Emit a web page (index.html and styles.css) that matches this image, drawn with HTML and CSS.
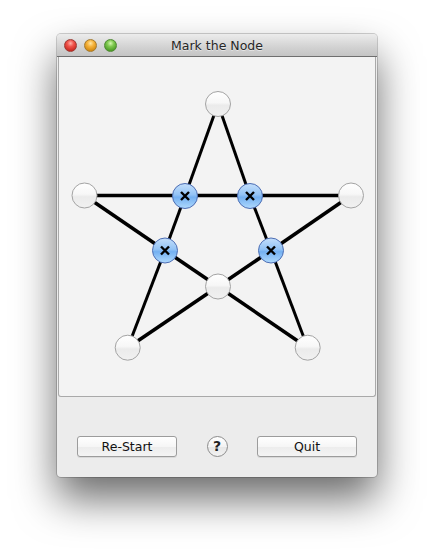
FILE: index.html
```html
<!DOCTYPE html>
<html lang="en">
  <head>
    <meta charset="UTF-8" />
    <title>Mark the Node</title>
    <link rel="stylesheet" href="styles.css">
  </head>
  <body>
    <div class="window">
      <div class="titlebar">
        <div class="lights">
          <span class="light red"></span>
          <span class="light yellow"></span>
          <span class="light green"></span>
        </div>
        <div class="title">Mark the Node</div>
      </div>
      <div class="board">
        <svg class="graph" width="318" height="339" viewBox="0 -1 318 339">
          <defs>
            <linearGradient id="white" x1="0" y1="0" x2="0" y2="1">
              <stop offset="0" stop-color="#ffffff" />
              <stop offset="0.45" stop-color="#f7f7f7" />
              <stop offset="0.55" stop-color="#ebebeb" />
              <stop offset="1" stop-color="#f1f1f1" />
            </linearGradient>
            <linearGradient id="blue" x1="0" y1="0" x2="0" y2="1">
              <stop offset="0" stop-color="#c4dffb" />
              <stop offset="0.45" stop-color="#93c3f5" />
              <stop offset="0.55" stop-color="#74b0f1" />
              <stop offset="1" stop-color="#b0dafd" />
            </linearGradient>
          </defs>
          <g class="edges">
            <line x1="159" y1="46" x2="126" y2="138" />
            <line x1="126" y1="138" x2="106" y2="192.5" />
            <line x1="106" y1="192.5" x2="68.7" y2="289.7" />
            <line x1="159" y1="46" x2="191" y2="138" />
            <line x1="191" y1="138" x2="212" y2="192.5" />
            <line x1="212" y1="192.5" x2="248.7" y2="289.7" />
            <line class="thick" x1="25.5" y1="137.5" x2="292" y2="137.5" />
            <line class="thick" x1="25.5" y1="137.5" x2="106" y2="192.5" />
            <line class="thick" x1="106" y1="192.5" x2="159" y2="228.5" />
            <line class="thick" x1="159" y1="228.5" x2="248.7" y2="289.7" />
            <line class="thick" x1="292" y1="137.5" x2="212" y2="192.5" />
            <line class="thick" x1="212" y1="192.5" x2="159" y2="228.5" />
            <line class="thick" x1="159" y1="228.5" x2="68.7" y2="289.7" />
          </g>
          <g class="node">
            <circle cx="159" cy="46" r="12.5" />
            <circle cx="25.5" cy="137.5" r="12.5" />
            <circle cx="292" cy="137.5" r="12.5" />
            <circle cx="159" cy="228.5" r="12.5" />
            <circle cx="68.7" cy="289.7" r="12.5" />
            <circle cx="248.7" cy="289.7" r="12.5" />
          </g>
          <g class="node marked">
            <circle cx="126" cy="138" r="12.5" />
            <circle cx="191" cy="138" r="12.5" />
            <circle cx="106" cy="192.5" r="12.5" />
            <circle cx="212" cy="192.5" r="12.5" />
          </g>
          <g class="cross">
            <path d="M122 134 l8 8 M130 134 l-8 8" />
            <path d="M187 134 l8 8 M195 134 l-8 8" />
            <path d="M102 188.5 l8 8 M110 188.5 l-8 8" />
            <path d="M208 188.5 l8 8 M216 188.5 l-8 8" />
          </g>
        </svg>
      </div>
      <div class="controls">
        <button class="push">Re-Start</button>
        <button class="help">?</button>
        <button class="push">Quit</button>
      </div>
    </div>
  </body>
</html>
```

FILE: styles.css
```css
html {
  background: #ffffff;
}

body {
  margin: 0;
  padding: 34px 0 0 57px;
  min-height: 556px;
  box-sizing: border-box;
  background: #ffffff;
  font-family: 'DejaVu Sans', 'Liberation Sans', sans-serif;
}

.window {
  width: 320px;
  height: 443px;
  background: #ececec;
  border-radius: 4px;
  box-shadow: 0 22px 42px rgba(0, 0, 0, 0.58), 0 0 0 1px rgba(0, 0, 0, 0.18);
  display: flex;
  flex-direction: column;
}

.titlebar {
  height: 22px;
  border-bottom: 1px solid #6e6e6e;
  border-radius: 4px 4px 0 0;
  background: linear-gradient(#ececec, #d2d2d2 60%, #c4c4c4);
  display: flex;
  align-items: center;
  position: relative;
}

.lights {
  display: flex;
  gap: 7px;
  padding-left: 7px;
  padding-top: 1px;
}

.light {
  width: 13px;
  height: 13px;
  border-radius: 50%;
  box-sizing: border-box;
}

.red {
  background: radial-gradient(circle at 50% 30%, #ffb1a8 0, #f0534a 35%, #c8281f 80%);
  border: 1px solid #9c3a34;
}

.yellow {
  background: radial-gradient(circle at 50% 30%, #ffe6a3 0, #f6b33c 35%, #d1880f 80%);
  border: 1px solid #a47a2e;
}

.green {
  background: radial-gradient(circle at 50% 30%, #d4f7b0 0, #7fc94f 35%, #4b9a25 80%);
  border: 1px solid #4f8a34;
}

.title {
  position: absolute;
  left: 0;
  right: 0;
  top: 4px;
  text-align: center;
  font-size: 12.5px;
  color: #262626;
  text-shadow: 0 1px 0 rgba(255, 255, 255, 0.5);
}

.board {
  height: 339px;
  margin: 0 1px;
  background: #f3f3f3;
  border: 1px solid #a9a9a9;
  border-top: none;
  border-radius: 0 0 3px 3px;
}

.graph {
  display: block;
}

.edges line {
  stroke: #000000;
  stroke-width: 3;
}

.edges line.thick {
  stroke-width: 3.6;
}

.node circle {
  fill: url(#white);
  stroke: #a3a3a3;
  stroke-width: 1;
}

.node.marked circle {
  fill: url(#blue);
  stroke: #4d6db3;
}

.cross path {
  stroke: #000000;
  stroke-width: 2.4;
  fill: none;
}

.controls {
  display: flex;
  justify-content: space-between;
  align-items: center;
  padding: 39px 20px 0;
}

.push {
  width: 100px;
  height: 21px;
  padding: 0;
  border: 1px solid #9c9c9c;
  border-radius: 3px;
  background: linear-gradient(#ffffff, #f6f6f6 50%, #ececec 51%, #f4f4f4);
  box-shadow: 0 1px 0 rgba(0, 0, 0, 0.08);
  font-family: 'DejaVu Sans', 'Liberation Sans', sans-serif;
  font-size: 12.5px;
  color: #111111;
}

.help {
  width: 21px;
  height: 21px;
  padding: 0;
  border: 1px solid #8c8c8c;
  border-radius: 50%;
  background: linear-gradient(#ffffff, #f3f3f3 50%, #e6e6e6 51%, #f2f2f2);
  font-family: 'DejaVu Sans', 'Liberation Sans', sans-serif;
  font-size: 14px;
  font-weight: bold;
  line-height: 19px;
  color: #222222;
}
```
